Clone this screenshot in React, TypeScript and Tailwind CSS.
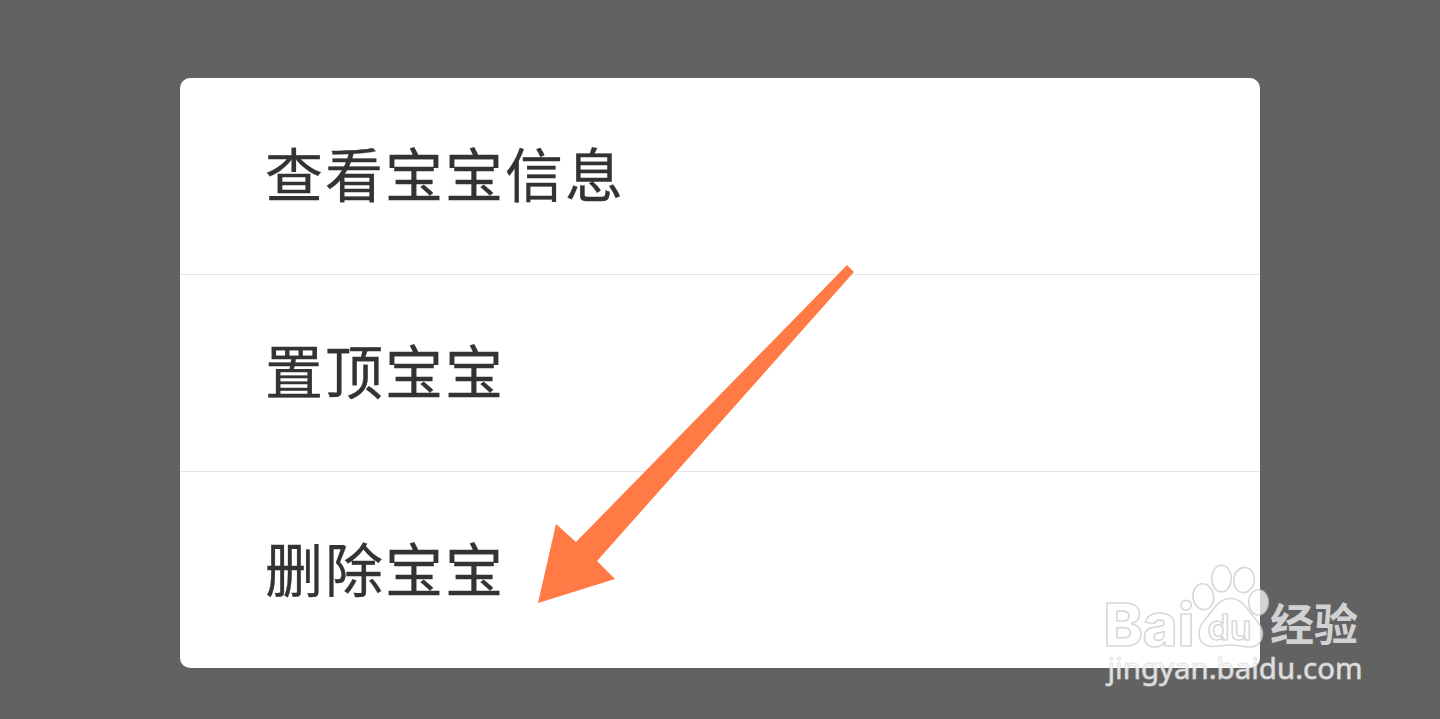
const actions = ["查看宝宝信息", "置顶宝宝", "删除宝宝"];

const toes = [
  { cx: 1203.3, cy: 596.7, rx: 10.3, ry: 13, tilt: -8 },
  { cx: 1221.5, cy: 578.5, rx: 9.8, ry: 13.3, tilt: 0 },
  { cx: 1244, cy: 580, rx: 10.3, ry: 12.7, tilt: 8 },
  { cx: 1258.5, cy: 602.3, rx: 9.8, ry: 12.5, tilt: 0 },
];

const Arrow = () => (
  <svg className="absolute top-0 left-0" width="1440" height="719" viewBox="0 0 1440 719" aria-hidden>
    <path fill="#ff7a45" d="M847 265L854 272L597 561L615 579L538 603L556 524L576 542Z" />
  </svg>
);

const Watermark = () => (
  <svg
    className="absolute top-[550px] left-[1090px]"
    width="290"
    height="150"
    viewBox="1090 550 290 150"
    strokeLinejoin="round"
  >
    <g fill="#fff" fillOpacity="0.72" stroke="#c8c8c8" strokeOpacity="0.7" strokeWidth="1.6">
      <text
        x="1103.5"
        y="645.5"
        fontSize="59"
        textLength="91"
        lengthAdjust="spacingAndGlyphs"
        className="font-['Inter',sans-serif] font-extrabold"
      >
        Bai
      </text>
      {toes.map((t) => (
        <ellipse
          key={t.cx}
          cx={t.cx}
          cy={t.cy}
          rx={t.rx}
          ry={t.ry}
          transform={`rotate(${t.tilt} ${t.cx} ${t.cy})`}
        />
      ))}
      <path d="M1230.5 598.5C1222 598.5 1217 604 1212 611C1207 618 1199 624 1199 633C1199 641 1204 646.5 1212 646.5C1219 646.5 1224 645 1230.5 645C1238 645 1242 647 1250 647C1258 647 1262.5 641 1262.5 633C1262.5 625 1254 618 1249 611C1244 604 1239 598.5 1230.5 598.5Z" />
      <text
        x="1207.5"
        y="639.5"
        fontSize="35"
        textLength="44"
        lengthAdjust="spacingAndGlyphs"
        className="font-['Inter',sans-serif] font-semibold"
      >
        du
      </text>
    </g>
    <text
      x="1270"
      y="640.5"
      fontSize="44"
      fill="#d1d1d1"
      textLength="88"
      className="font-['Noto_Sans_CJK_SC',sans-serif] font-bold"
    >
      经验
    </text>
    <text
      x="1107.5"
      y="679"
      fontSize="28.5"
      fill="#fff"
      fillOpacity="0.82"
      stroke="#d4d4d4"
      strokeOpacity="0.7"
      strokeWidth="1"
      textLength="255"
      lengthAdjust="spacingAndGlyphs"
      className="font-['Noto_Sans',sans-serif]"
    >
      jingyan.baidu.com
    </text>
  </svg>
);

const App = () => {
  return (
    <main className="relative h-[719px] w-full overflow-hidden bg-[#626262] px-[180px] pt-[78px] font-['Noto_Sans_CJK_SC',sans-serif]">
      <ul className="h-[590px] divide-y divide-[#e4e4e4] rounded-[10px] bg-white">
        {actions.map((label) => (
          <li
            key={label}
            className="flex h-[197px] items-center pb-[7px] pl-[85px] text-[58px] tracking-[2px] text-[#333] [-webkit-text-stroke:0.3px_#333]"
          >
            {label}
          </li>
        ))}
      </ul>
      <Arrow />
      <Watermark />
    </main>
  );
};

export default App;
